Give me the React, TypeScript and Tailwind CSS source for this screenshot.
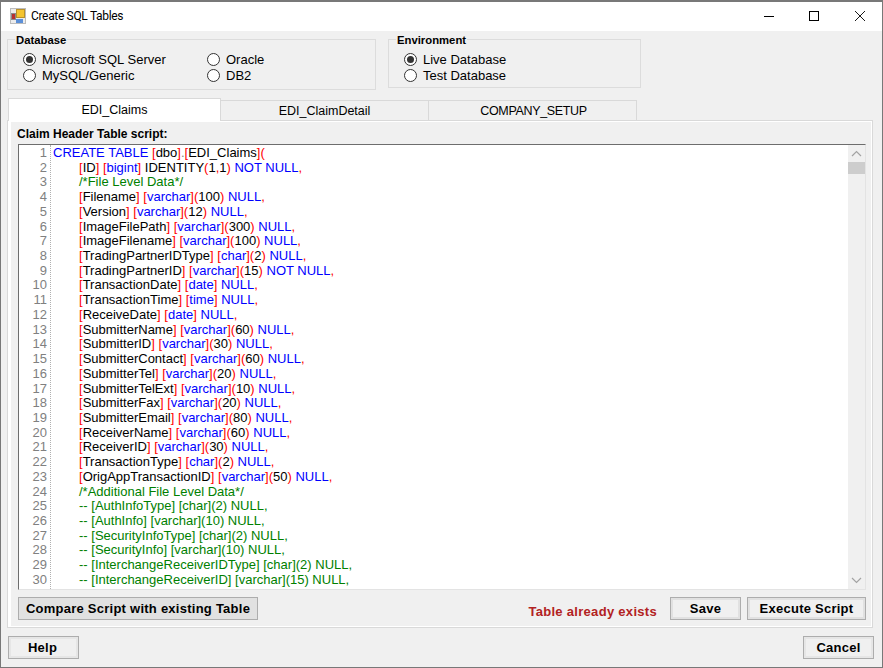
const font = "font-['Liberation_Sans',Arial,sans-serif]";

const script = [
  "CREATE TABLE [dbo].[EDI_Claims](",
  "\t[ID] [bigint] IDENTITY(1,1) NOT NULL,",
  "\t/*File Level Data*/",
  "\t[Filename] [varchar](100) NULL,",
  "\t[Version] [varchar](12) NULL,",
  "\t[ImageFilePath] [varchar](300) NULL,",
  "\t[ImageFilename] [varchar](100) NULL,",
  "\t[TradingPartnerIDType] [char](2) NULL,",
  "\t[TradingPartnerID] [varchar](15) NOT NULL,",
  "\t[TransactionDate] [date] NULL,",
  "\t[TransactionTime] [time] NULL,",
  "\t[ReceiveDate] [date] NULL,",
  "\t[SubmitterName] [varchar](60) NULL,",
  "\t[SubmitterID] [varchar](30) NULL,",
  "\t[SubmitterContact] [varchar](60) NULL,",
  "\t[SubmitterTel] [varchar](20) NULL,",
  "\t[SubmitterTelExt] [varchar](10) NULL,",
  "\t[SubmitterFax] [varchar](20) NULL,",
  "\t[SubmitterEmail] [varchar](80) NULL,",
  "\t[ReceiverName] [varchar](60) NULL,",
  "\t[ReceiverID] [varchar](30) NULL,",
  "\t[TransactionType] [char](2) NULL,",
  "\t[OrigAppTransactionID] [varchar](50) NULL,",
  "\t/*Additional File Level Data*/",
  "\t-- [AuthInfoType] [char](2) NULL,",
  "\t-- [AuthInfo] [varchar](10) NULL,",
  "\t-- [SecurityInfoType] [char](2) NULL,",
  "\t-- [SecurityInfo] [varchar](10) NULL,",
  "\t-- [InterchangeReceiverIDType] [char](2) NULL,",
  "\t-- [InterchangeReceiverID] [varchar](15) NULL,",
  "\t-- [InterchangeDateMMdd] [date] NULL,",
];

const keywords = ["CREATE", "TABLE", "NOT", "NULL", "varchar", "char", "bigint", "date", "time"];

function tokenClass(tok: string) {
  if (/^[[\]()]$/.test(tok) || tok === ",") return "text-[#ff0000]";
  if (tok === ".") return "text-[#808080]";
  if (keywords.includes(tok)) return "text-[#0000ff]";
  return "text-black";
}

function CodeLine({ text }: { text: string }) {
  const body = text.replace("\t", "");
  const indent = text.startsWith("\t") ? "pl-[26px]" : "";
  if (body.startsWith("/*") || body.startsWith("--")) {
    return <div className={`${indent} whitespace-pre text-[#008000]`}>{body}</div>;
  }
  const parts = body.split(/([[\]().,]|\s+)/).filter(Boolean);
  return (
    <div className={`${indent} whitespace-pre`}>
      {parts.map((p, i) => (
        <span key={i} className={tokenClass(p)}>{p}</span>
      ))}
    </div>
  );
}

function Radio({ label, checked }: { label: string; checked?: boolean }) {
  return (
    <div className="flex h-[16px] items-center">
      <span className="-mt-px flex h-[13px] w-[13px] items-center justify-center rounded-full border border-[#333] bg-white">
        {checked && <span className="h-[7px] w-[7px] rounded-full bg-[#333]" />}
      </span>
      <span className="ml-[6px] text-[13px] text-black">{label}</span>
    </div>
  );
}

function Button({ label, className }: { label: string; className: string }) {
  return (
    <button className={`h-[23px] border border-[#adadad] text-[13px] font-bold tracking-[0.25px] text-black ${className}`}>
      {label}
    </button>
  );
}

function Tab({ label, active, className }: { label: string; active?: boolean; className: string }) {
  return (
    <div
      className={`flex items-center justify-center border border-b-0 border-[#d9d9d9] text-[12.5px] text-black ${
        active ? "relative z-10 h-[23px] bg-white" : "mt-[2px] h-[20px] border-l-0 bg-[#f0f0f0] pt-[2px]"
      } ${className}`}
    >
      {label}
    </div>
  );
}

export default function App() {
  return (
    <div className={`flex h-[668px] w-[883px] flex-col overflow-hidden border border-t-2 border-[#787878] bg-[#f0f0f0] ${font}`}>
      {/* title bar */}
      <div className="flex h-[29px] shrink-0 items-center bg-white">
        <svg className="ml-[9px] -mt-[2px] h-[16px] w-[16px]" viewBox="0 0 16 16">
          <rect x="0.5" y="0.5" width="15" height="15" fill="#ececec" stroke="#bcbcbc" />
          <rect x="1.5" y="5.5" width="4" height="6" fill="#b83030" stroke="#8a8a8a" />
          <rect x="6.5" y="1.5" width="8" height="8" fill="#f4c430" stroke="#b8912b" />
          <rect x="6" y="11" width="7" height="4" fill="#5b8fd8" />
        </svg>
        <span className="ml-[5px] -mt-[1px] font-['Roboto',sans-serif] text-[12px] tracking-[-0.33px] text-black">Create SQL Tables</span>
        <div className="ml-auto flex items-center pr-[17px] -mt-[2px]">
          <svg className="mr-[35px] h-[10px] w-[10px]" viewBox="0 0 10 10" fill="none" stroke="#000">
            <path d="M0 5.5H10" />
          </svg>
          <svg className="mr-[36px] h-[10px] w-[10px]" viewBox="0 0 10 10" fill="none" stroke="#000">
            <rect x="0.5" y="0.5" width="9" height="9" />
          </svg>
          <svg className="h-[10px] w-[10px]" viewBox="0 0 10 10" fill="none" stroke="#000" strokeWidth="0.9">
            <path d="M0 0 10 10M10 0 0 10" />
          </svg>
        </div>
      </div>

      {/* option groups */}
      <div className="flex h-[67px] shrink-0 items-start pl-[6px] pt-[2px]">
        <fieldset className="h-[57px] w-[369px] border border-[#dcdcdc] pl-[15px]">
          <legend className="ml-[-8px] translate-y-px px-[1px] text-[11.3px] leading-[13px] font-bold text-black">Database</legend>
          <div className="mt-[6px] flex">
            <div className="w-[184px]">
              <Radio label="Microsoft SQL Server" checked />
              <Radio label="MySQL/Generic" />
            </div>
            <div>
              <Radio label="Oracle" />
              <Radio label="DB2" />
            </div>
          </div>
        </fieldset>
        <fieldset className="ml-[12px] h-[55px] w-[253px] border border-[#dcdcdc] pl-[15px]">
          <legend className="ml-[-8px] translate-y-px px-[1px] text-[11.3px] leading-[13px] font-bold text-black">Environment</legend>
          <div className="mt-[6px]">
            <Radio label="Live Database" checked />
            <Radio label="Test Database" />
          </div>
        </fieldset>
      </div>

      {/* tabs */}
      <div className="flex h-[22px] shrink-0 pl-[7px]">
        <Tab label="EDI_Claims" active className="w-[213px]" />
        <Tab label="EDI_ClaimDetail" className="w-[208px]" />
        <Tab label="COMPANY_SETUP" className="w-[208px] pl-[2px] tracking-[-0.35px]" />
      </div>

      {/* tab page */}
      <div className="ml-[6px] h-[508px] w-[866px] shrink-0 border border-[#d9d9d9] bg-white pt-[1px] pr-[1px] pb-[1px] pl-[3px]">
        <div className="flex h-full flex-col bg-[#f0f0f0] pl-[7px]">
          <div className="-ml-px h-[22px] pt-[5px] text-[12px] leading-[14px] font-bold text-black">Claim Header Table script:</div>
          <div className="flex h-[446px] w-[848px] overflow-hidden border-t border-l border-t-[#6d6d6d] border-l-[#6d6d6d] border-r border-b border-r-[#e3e3e3] border-b-[#e3e3e3] bg-white">
            <div className="h-full w-[32px] shrink-0 border-r border-dotted border-[#b0b0b0] pt-[1px] pr-[3px] text-right text-[13px] leading-[14.72px] text-[#808080]">
              {script.map((_, i) => (
                <div key={i}>{i + 1}</div>
              ))}
            </div>
            <div className="min-w-0 flex-1 pt-[1px] pl-[2px] text-[13px] leading-[14.72px]">
              {script.map((line, i) => (
                <CodeLine key={i} text={line} />
              ))}
            </div>
            <div className="flex w-[17px] shrink-0 flex-col items-center bg-[#f0f0f0]">
              <svg className="mt-[5px] h-[8px] w-[11px]" viewBox="0 0 11 8" fill="none" stroke="#a3a3a3" strokeWidth="1.2">
                <path d="M1 6 5.5 1.5 10 6" />
              </svg>
              <div className="mt-[4px] h-[12px] w-full bg-[#cdcdcd]" />
              <svg className="mt-auto mb-[5px] h-[8px] w-[11px]" viewBox="0 0 11 8" fill="none" stroke="#a3a3a3" strokeWidth="1.2">
                <path d="M1 2 5.5 6.5 10 2" />
              </svg>
            </div>
          </div>
          <div className="mt-[6px] flex items-center">
            <Button label="Compare Script with existing Table" className="w-[240px] bg-[#e1e1e1]" />
            <span className="ml-auto mt-[6px] text-[13px] font-bold tracking-[0.3px] text-[#b22222]">Table already exists</span>
            <Button label="Save" className="ml-[13px] w-[71px] bg-[#f0f0f0] shadow-[inset_0_0_0_2px_#e1e1e1]" />
            <Button label="Execute Script" className="ml-[6px] mr-[5px] w-[119px] bg-[#f0f0f0] shadow-[inset_0_0_0_2px_#e1e1e1]" />
          </div>
        </div>
      </div>

      {/* footer buttons */}
      <div className="mt-[8px] flex justify-between pl-[7px] pr-[8px]">
        <Button label="Help" className="w-[71px] bg-[#f0f0f0] pr-[2px] shadow-[inset_0_0_0_2px_#e6e6e6]" />
        <Button label="Cancel" className="w-[71px] bg-[#f0f0f0] shadow-[inset_0_0_0_2px_#e6e6e6]" />
      </div>
    </div>
  );
}
